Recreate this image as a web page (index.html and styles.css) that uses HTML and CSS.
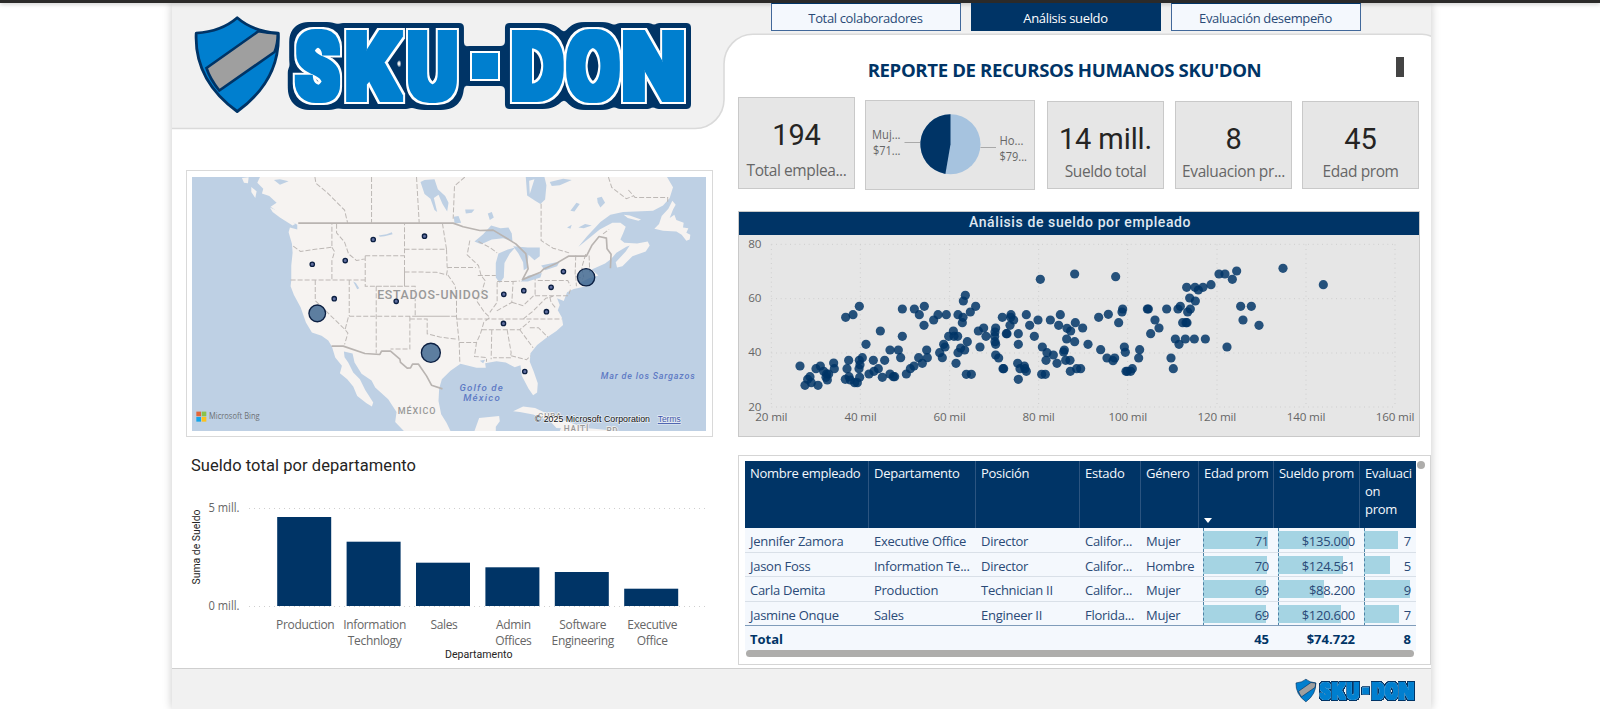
FILE: index.html
```html
<!DOCTYPE html>
<html lang="es">
<head>
<meta charset="utf-8">
<title>Reporte de recursos humanos</title>
<link rel="stylesheet" href="styles.css">
</head>
<body>
<div class="topbar"></div>
<div class="page">
  <svg class="backdrop" width="1259" height="134" viewBox="172 3 1259 134">
    <path class="backdrop-shape" d="M170 128.5H695A29 29 0 0 0 724 99V64A29 30 0 0 1 753 34.2H1422Q1428 34.2 1433 37V-5H170Z"/>
  </svg>
  <div class="columns">
    <div class="left">
      <svg class="logo" viewBox="192 14 502 101" width="502" height="101">
        <defs>
          <filter id="layers" filterUnits="userSpaceOnUse" x="280" y="14" width="420" height="104" color-interpolation-filters="sRGB">
            <feMorphology in="SourceGraphic" operator="dilate" radius="3" result="core"/>
            <feMorphology in="SourceAlpha" operator="dilate" radius="5" result="a1"/>
            <feFlood flood-color="#ffffff"/><feComposite in2="a1" operator="in" result="white"/>
            <feMorphology in="SourceAlpha" operator="dilate" radius="10"/>
            <feGaussianBlur stdDeviation="2"/>
            <feComponentTransfer result="a2"><feFuncA type="linear" slope="6" intercept="-2.500"/></feComponentTransfer>
            <feFlood flood-color="#003466"/><feComposite in2="a2" operator="in" result="navy"/>
            <feMerge><feMergeNode in="navy"/><feMergeNode in="white"/><feMergeNode in="core"/></feMerge>
          </filter>
        </defs>
        <g id="brand">
          <path class="shield" d="M237.2 17.8Q253 31.5 278.3 33.2Q280.500 80 237.200 111.500Q194 80 196.200 33.200Q221.500 31.500 237.200 17.800Z"/>
          <path class="band" d="M206.500 68L258.500 31.200Q268 33 277.800 33.400Q277.700 44 274.500 52L219.300 90.500Q210 79 206.500 68Z"/>
          <path class="shield-line" d="M237.2 17.8Q253 31.5 278.3 33.2Q280.500 80 237.200 111.500Q194 80 196.200 33.200Q221.500 31.500 237.200 17.800Z"/>
          <g class="word" filter="url(#layers)">
            <text x="295.500" y="98.800" textLength="44">S</text><text x="344.500" y="98.800" textLength="55">K</text><text x="407" y="98.800" textLength="51">U</text>
            <rect x="475" y="56" width="20" height="20"/>
            <text x="510.500" y="98.800" textLength="53">D</text><text x="566.500" y="98.800" textLength="53">O</text><text x="621" y="98.800" textLength="65">N</text>
          </g>
        </g>
      </svg>

      <div class="map-frame">
        <svg class="map" viewBox="36 35 1543 760" preserveAspectRatio="none">
          <rect class="sea" x="36" y="35" width="1543" height="760"/>
          <path class="land" d="M240 35L232 52L250 70L246 84L268 92L290 112L272 124L292 138L300 152L330 165L352 178L352 192L330 186L326 200L336 235L338 262L334 300L334 345L332 362L342 388L362 425L378 470L396 500L425 510L445 524L456 542L466 575L486 600L480 622L502 640L520 662L532 690L560 712L576 722L580 710L556 672L540 640L520 620L505 590L494 574L492 557L518 563L524 590L545 624L575 644L586 665L625 700L650 738L646 768L672 795H812L800 770L784 745L776 705L778 668L786 640L812 615L842 594L890 606L918 606L916 592L950 586L978 590L1005 604L1022 598L1026 630L1046 668L1060 688L1072 680L1074 652L1062 618L1050 588L1052 562L1072 538L1100 516L1130 496L1150 478L1146 455L1134 434L1140 418L1132 398L1152 406L1162 380L1182 370L1220 362L1200 352L1228 338L1256 330L1236 312L1276 294L1294 280L1310 262L1340 244L1350 240L1338 258L1308 290L1312 306L1328 302L1358 272L1398 258L1410 240L1404 228L1372 234L1334 232L1322 222L1330 204L1338 184L1322 172L1298 172L1260 192L1226 220L1196 244L1222 212L1262 170L1292 148L1330 140L1420 136L1450 120L1470 98L1480 66L1462 35Z"/>
          <path class="land" d="M270 126L292 136L330 160L346 176L338 180L300 156L278 140ZM186 38L206 36L204 54L192 52ZM214 65L230 78L226 98L214 80ZM1478 106L1466 130L1446 152L1438 176L1424 190L1450 196L1490 198L1506 208L1520 226L1530 222L1532 208L1520 202L1526 188L1510 186L1512 172L1490 164L1484 148L1470 158L1480 132L1488 118ZM1332 148L1350 150L1384 162L1376 166L1344 158ZM1000 736L1030 722L1066 726L1104 744L1150 762L1200 780L1190 788L1130 786L1110 764L1060 746L1020 738ZM1148 776L1190 784L1260 790L1310 795H1140ZM898 756L958 750L960 766L948 782V795H884Z"/>
          <path class="lake" d="M884 228L910 206L934 180L962 188L986 186L996 204L998 228L970 218L936 222L904 236ZM948 292L956 264L984 252L1006 246L990 264L974 292L972 336L960 352L948 336ZM1000 242L1044 246L1080 246L1080 272L1064 284L1046 268L1042 308L1032 314L1030 290L1016 264ZM1022 348L1046 330L1086 322L1082 336L1044 348ZM1084 300L1140 288L1132 302L1096 314ZM1038 35L1042 90L1066 106L1082 116L1096 102L1100 60L1094 35ZM722 50L734 44L764 42L774 72L796 92L806 112L802 138L788 116L776 88L762 98L772 140L764 134L752 100L734 86ZM1110 50L1150 40L1176 44L1140 60L1116 62ZM1172 136L1190 112L1200 116L1184 138ZM1252 98L1266 94L1276 112L1262 126L1254 112ZM1162 186L1176 178L1172 190ZM1196 186L1216 176L1236 180L1212 188ZM924 144L936 140L942 156L930 164ZM856 132L884 132L876 142L858 144ZM822 154L836 152L844 172L824 174ZM596 210L620 206L636 200L638 206L614 212L600 214ZM520 348L528 352L538 368L532 371ZM282 44L300 42L326 48L300 58ZM1048 46L1064 42L1050 86ZM900 585L916 582L910 592Z"/>
          <g class="state">
            <path d="M405 35L408 54L440 80L494 134L503 172M575 35V172M710 35L718 172M855 35L824 62L820 160M1084 115V225L1120 248L1168 262M1286 35L1296 66L1340 100L1360 92M1346 74L1366 96H1464V112"/>
            <path d="M340 242L362 258L400 252L456 245V175M456 245L464 258L456 285V342M332 343H556M470 175V202L494 230L506 265L530 285L556 280M556 271H674V175M556 271V362H674V271M674 251H800L788 175M674 319L770 320L800 328L804 306H888M800 251L802 306M406 343V405L496 492L504 502L494 536M508 343V450M508 452H810M496 490L506 452M589 362V563M589 362H706V452H835M674 319V362M690 452V550H632M690 460H742V504L780 514L830 520M804 328L826 360L830 400V452L838 530L840 588M870 225L862 268L896 300L904 330L916 345L904 385L890 405L914 440L930 455L912 470L902 504L890 530L884 572L920 575V588M838 530H890M830 460H1146M906 492H1020L1050 466M896 228L930 246L952 262M894 330H948M952 350V410L930 440M952 348H1000L996 410L950 436M996 348L1020 346M996 410L1030 420L1066 386V340M1066 390H1166L1172 372M1074 345H1164L1172 360M936 492L934 580M982 492L994 560L992 576H940M994 570L1040 582L1052 570M1020 492L1060 546M1050 486L1076 486L1104 514M1030 460L1060 436L1098 398L1120 392M1110 394L1114 410L1130 430M1188 270L1186 330L1210 340M1218 266L1206 306L1212 335M1228 270L1230 320M1188 330L1190 362M1270 205L1288 192"/>
          </g>
          <path class="border" d="M355 173H820L850 184L900 195L940 194L1008 235L1038 264L1045 310L1028 342L1082 320L1092 310L1132 292L1166 272H1220L1236 240L1258 213L1280 218L1282 250L1294 266L1292 308M455 541H490L555 563L600 566L605 556H632L660 580L662 590L682 607L692 606L698 595H716L740 630L755 658L788 669"/>
          <g class="country">
            <text x="592" y="400" font-size="37" textLength="333">ESTADOS-UNIDOS</text>
            <text x="654" y="745" font-size="27" textLength="113">MÉXICO</text>
            <text x="1075" y="757" font-size="24" textLength="70">CUBA</text>
            <text x="1152" y="797" font-size="25" textLength="74">HAITÍ</text>
            <text x="1280" y="803" font-size="25" textLength="34">RD</text>
          </g>
          <g class="water">
            <text x="839" y="674" font-size="29" textLength="130">Golfo de</text>
            <text x="850" y="706" font-size="29" textLength="110">México</text>
            <text x="1263" y="640" font-size="27" textLength="282">Mar de los Sargazos</text>
          </g>
          <g class="pins">
            <circle cx="412" cy="443" r="25"/><circle cx="753" cy="561" r="28.500"/><circle cx="1219" cy="335" r="26"/>
            <g class="dot">
            <circle cx="580" cy="222" r="6.500"/><circle cx="734" cy="212" r="6.500"/><circle cx="397" cy="296" r="6.500"/><circle cx="496" cy="285" r="6.500"/><circle cx="463" cy="399" r="6.500"/><circle cx="649" cy="407" r="6.500"/><circle cx="1151" cy="318" r="6.500"/><circle cx="1114" cy="365" r="6.500"/><circle cx="1032" cy="375" r="6.500"/><circle cx="972" cy="386" r="6.500"/><circle cx="1100" cy="438" r="6.500"/><circle cx="971" cy="473" r="6.500"/><circle cx="1035" cy="617" r="6.500"/>
            </g>
          </g>
          <rect x="49" y="737" width="14" height="14" fill="#e2673a"/><rect x="65" y="737" width="14" height="14" fill="#8bc34a"/><rect x="49" y="753" width="14" height="14" fill="#14a5ea"/><rect x="65" y="753" width="14" height="14" fill="#fbc21d"/>
          <text class="bing" x="87" y="760" textLength="152">Microsoft Bing</text>
          <text class="copy" x="1065" y="768" textLength="346">© 2025 Microsoft Corporation</text>
          <text class="terms" x="1434" y="768" textLength="69">Terms</text>
        </svg>
      </div>

      <div class="bars">
        <h2>Sueldo total por departamento</h2>
        <svg class="bars-plot" viewBox="186 480 530 185" width="530" height="185">
          <path class="grid" d="M249 508.500H709M249 606.500H709"/>
          <g class="axis"><text x="208.500" y="512" textLength="31">5 mill.</text><text x="208.500" y="610" textLength="31">0 mill.</text></g>
          <text class="axis-title" transform="translate(200 584.500) rotate(-90)" textLength="75">Suma de Sueldo</text>
          <g id="bars"></g>
          <text class="axis-title" x="445" y="658.300" textLength="67.500">Departamento</text>
        </svg>
      </div>
    </div>

    <div class="right">
      <nav class="tabs"><a class="tab">Total colaboradores</a><a class="tab on">Análisis sueldo</a><a class="tab">Evaluación desempeño</a></nav>
      <div class="title-row"><h1>REPORTE DE RECURSOS HUMANOS SKU'DON</h1><span class="marker"></span></div>
      <div class="cards">
        <div class="card first"><b>194</b><span>Total emplea...</span></div>
        <div class="card pie">
          <svg width="169" height="88" viewBox="866 101 169 88">
            <circle cx="950.500" cy="144.300" r="30" fill="#a6c3df"/>
            <path d="M950.500 144.300V114.300A30 30 0 0 0 945.400 173.900Z" fill="#003466"/>
            <path class="leader" d="M904.500 142.500H920M980.500 147.500H996"/>
            <g class="axis"><text x="872" y="139" textLength="28.500">Muj...</text><text x="873" y="155" textLength="27.500">$71...</text><text x="999.500" y="144.500" textLength="24">Ho...</text><text x="999.500" y="160.500" textLength="27.500">$79...</text></g>
          </svg>
        </div>
        <div class="card"><b>14 mill.</b><span>Sueldo total</span></div>
        <div class="card"><b>8</b><span>Evaluacion pr...</span></div>
        <div class="card"><b>45</b><span>Edad prom</span></div>
      </div>

      <div class="scatter">
        <h3>Análisis de sueldo por empleado</h3>
        <svg width="680" height="201" viewBox="27 92 2040 603">
          <path class="grid3" d="M124 117H1997M124 280H1997M124 443H1997M124 605H1997M124 117V605M391 117V605M659 117V605M926 117V605M1193 117V605M1461 117V605M1728 117V605M1995 117V605"/>
          <g id="scatter-axis" class="axis3"></g>
          <g id="scatter-points" class="points"></g>
        </svg>
      </div>

      <div class="table-frame">
        <div class="table">
          <div class="row head">
            <div>Nombre empleado</div><div>Departamento</div><div>Posición</div><div>Estado</div><div>Género</div><div class="sorted">Edad prom</div><div>Sueldo prom</div><div>Evaluaci<br>on<br>prom</div>
          </div>
          <div class="row"><div>Jennifer Zamora</div><div>Executive Office</div><div>Director</div><div>Califor...</div><div>Mujer</div><div class="num"><i style="width:65px"></i><em>71</em></div><div class="num"><i style="width:71px"></i><em>$135.000</em></div><div class="num"><i style="width:34px"></i><em>7</em></div></div>
          <div class="row"><div>Jason Foss</div><div>Information Te...</div><div>Director</div><div>Califor...</div><div>Hombre</div><div class="num"><i style="width:64px"></i><em>70</em></div><div class="num"><i style="width:65px"></i><em>$124.561</em></div><div class="num"><i style="width:26px"></i><em>5</em></div></div>
          <div class="row"><div>Carla Demita</div><div>Production</div><div>Technician II</div><div>Califor...</div><div>Mujer</div><div class="num"><i style="width:63px"></i><em>69</em></div><div class="num"><i style="width:46px"></i><em>$88.200</em></div><div class="num"><i style="width:46px"></i><em>9</em></div></div>
          <div class="row last"><div>Jasmine Onque</div><div>Sales</div><div>Engineer II</div><div>Florida...</div><div>Mujer</div><div class="num"><i style="width:63px"></i><em>69</em></div><div class="num"><i style="width:63px"></i><em>$120.600</em></div><div class="num"><i style="width:35px"></i><em>7</em></div></div>
          <div class="row total"><div>Total</div><div></div><div></div><div></div><div></div><div class="num"><em>45</em></div><div class="num"><em>$74.722</em></div><div class="num"><em>8</em></div></div>
          <div class="hscroll"></div>
        </div>
        <div class="vscroll"></div>
      </div>
    </div>
  </div>
  <footer class="footer">
    <svg viewBox="192 14 502 101" width="121" height="25"><use href="#brand"/></svg>
  </footer>
</div>
<script src="charts.js"></script>
</body>
</html>
```

FILE: styles.css
```css
* { box-sizing: border-box; }
body { margin: 0; width: 1600px; height: 709px; overflow: hidden; background: #fff; font-family: "Open Sans", "Noto Sans", sans-serif; color: #252423; }
h1, h2, h3 { margin: 0; }
.topbar { height: 3px; background: #2b2a29; position: relative; z-index: 3; box-shadow: 0 1px 4px rgba(0,0,0,.25); }
.page { position: relative; width: 1259px; height: 706px; margin-left: 172px; background: #fff; box-shadow: 0 0 9px rgba(0,0,0,.22); display: flex; flex-direction: column; }
.backdrop { position: absolute; left: 0; top: 0; display: block; }
.backdrop-shape { fill: #f1f1f1; stroke: #dadada; stroke-width: 1.600; }
.columns { position: relative; display: grid; grid-template-columns: 566px 693px; height: 665px; }
.left { padding-left: 14px; }
.right { display: flex; flex-direction: column; }

.logo { display: block; margin: 11px 0 0 6px; }
.shield { fill: #007fcf; }
.band { fill: #9f9f9f; stroke: #003466; stroke-width: 2.600; }
.shield-line { fill: none; stroke: #003466; stroke-width: 2.800; stroke-linejoin: round; }
.word { fill: #007fcf; }
.word text { font: 900 93px Roboto, sans-serif; }

.map-frame { margin-top: 55px; width: 527px; height: 267px; border: 1.500px solid #d9d9d9; background: #fff; padding: 6px 6px 5px 5px; }
.map { display: block; width: 514px; height: 254px; }
.sea, .lake { fill: #bed0e4; }
.land { fill: #f6f3f1; }
.state { fill: none; stroke: #bdb8b5; stroke-width: 3; stroke-dasharray: 15 6; }
.border { fill: none; stroke: #b9b4b1; stroke-width: 5; stroke-linejoin: round; }
.country { font-family: Roboto, sans-serif; font-weight: 500; fill: #999; stroke: #f6f3f1; stroke-width: 4; paint-order: stroke; }
.water { font-family: Roboto, sans-serif; font-weight: 500; font-style: italic; fill: #5f7bc4; }
.pins { fill: #37608c; fill-opacity: .8; stroke: #0b1f42; stroke-width: 4; }
.dot { fill: #3c4d8c; }
.bing { font: 500 25px "Open Sans", sans-serif; fill: #6d7175; }
.copy, .terms { font: 27px "Liberation Sans", sans-serif; fill: #111; stroke: #fff; stroke-opacity: .6; stroke-width: 4; paint-order: stroke; }
.terms { fill: #3d55a8; text-decoration: underline; }

.bars { margin-top: 17px; }
.bars h2 { font: 400 16.500px/23px Roboto, sans-serif; letter-spacing: .05px; padding-left: 5px; height: 26px; white-space: nowrap; }
.bars-plot { display: block; }
.grid { stroke: #cfcfcf; stroke-width: 1; stroke-dasharray: 1 4; fill: none; }
.axis { font-size: 12px; fill: #666; }
.axis-title { font: 400 10px Roboto, sans-serif; fill: #252423; }
.bar { fill: #003466; }
.bar-label { text-anchor: middle; font-size: 12px; letter-spacing: -.35px; fill: #666; }

.tabs { display: flex; gap: 10px; margin-left: 32.500px; height: 29px; position: relative; z-index: 4; }
.tab { width: 190px; height: 28px; border: 1.500px solid #41689a; border-top-color: #003466; background: #f4f8fd; color: #2a4a77; font-size: 13px; line-height: 28px; letter-spacing: -.35px; text-align: center; }
.tab.on { background: #003466; border-color: #003466; color: #fff; }
.title-row { display: flex; height: 65px; position: relative; }
h1 { width: 655px; text-align: center; padding: 24px 2px 0 0; font-size: 18.600px; line-height: 27px; font-weight: 700; letter-spacing: -.36px; color: #003466; white-space: nowrap; }
.marker { width: 8px; height: 20px; margin: 25px 0 0 3px; background: #444; }
.cards { display: flex; align-items: flex-start; height: 114px; }
.card { width: 117px; height: 88px; margin: 4px 0 0 11px; border: 1.500px solid #c9c9c9; background: #e6e6e6; display: flex; flex-direction: column; align-items: center; white-space: nowrap; }
.card b { font: 400 29px/34px Roboto, sans-serif; margin-top: 20px; letter-spacing: -.1px; }
.card span { font-size: 15.500px; line-height: 22px; margin-top: 4px; color: #666; letter-spacing: -.4px; }
.card.first { margin: 0; height: 92px; }
.card.first span { margin-top: 7px; }
.card.pie { width: 170px; height: 90px; margin: 3px 0 0 10px; }
.card.pie svg { display: block; }
.pie + .card { margin-left: 12px; }
.card:last-child { margin-left: 10px; }
.leader { stroke: #a9a9a9; stroke-width: 1; }

.scatter { width: 682px; height: 226px; border: 1px solid #c9c9c9; background: #e6e6e6; }
.scatter h3 { height: 23px; margin-bottom: 1px; background: #003466; color: #dfe7f0; font: 500 14px/20px Roboto, sans-serif; letter-spacing: .6px; text-align: center; padding-left: 2px; }
.scatter svg { display: block; margin-left: 0; }
.grid3 { stroke: #cecece; stroke-width: 3; stroke-dasharray: 3 11; fill: none; }
.axis3 { font-size: 35px; fill: #666; letter-spacing: -.5px; }
.points { fill: #003466; fill-opacity: .84; }

.table-frame { margin-top: 18px; width: 693px; height: 210px; border: 1.500px solid #d5d5d5; background: #fff; display: flex; padding: 5px 0 0 6px; }
.table { width: 671px; height: 190px; background: #f4f8fd; color: #2a4a77; font-size: 13px; letter-spacing: -.27px; }
.row { display: grid; grid-template-columns: 124px 107px 104px 61px 58px 75px 86px 56px; height: 24.500px; line-height: 26px; border-bottom: 1px solid #d9e0e8; white-space: nowrap; }
.row > div { padding-left: 5px; position: relative; overflow: hidden; }
.row.head { height: 67px; line-height: 18px; background: #003466; color: #f4f8fd; border: 0; }
.row.head > div { padding-top: 3px; border-right: 1px solid #2b5480; }
.row.head > div:last-child { border: 0; }
.sorted::after { content: ""; position: absolute; left: 5px; bottom: 5px; border: 4.500px solid transparent; border-top: 5.500px solid #fff; border-bottom: 0; }
.row.last { height: 24px; border-bottom: 1.500px solid #7f9cba; }
.num i { position: absolute; left: 4px; top: 3px; height: 18px; background: #a5d4e3; }
.num::before { content: ""; position: absolute; left: 4px; top: 0; height: 24px; border-left: 1px dashed #4e83a6; z-index: 1; }
.num em { position: relative; display: block; font-style: normal; text-align: right; padding-right: 5px; }
.total .num::before { display: none; }
.total { font-weight: 700; color: #003466; height: 24.500px; border: 0; line-height: 26px; letter-spacing: 0; }
.hscroll { height: 7px; margin: 0 2px 0 1px; border-radius: 4px; background: #aeadab; }
.vscroll { width: 8px; height: 8px; border-radius: 4px; background: #aeadab; margin: 0 0 0 1px; }

.footer { position: relative; height: 41px; background: #f1f1f1; border-top: 1.500px solid #cfcfcf; display: flex; justify-content: flex-end; padding: 9px 15px 0 0; }
```

FILE: charts.js
```js
const NS = "http://www.w3.org/2000/svg";
function add(parent, tag, attrs, text) {
  const el = document.createElementNS(NS, tag);
  for (const k in attrs) el.setAttribute(k, attrs[k]);
  if (text) el.textContent = text;
  parent.appendChild(el);
}

// Bar chart: label lines and bar top
const bars = document.getElementById("bars");
[
  [["Production"], 517], [["Information", "Technlogy"], 541.7], [["Sales"], 562.7],
  [["Admin", "Offices"], 567.3], [["Software", "Engineering"], 572], [["Executive", "Office"], 588.7]
].forEach(([lines, top], i) => {
  const x = 277.2 + i * 69.4;
  add(bars, "rect", { class: "bar", x, y: top, width: 54, height: 606 - top });
  lines.forEach((t, n) => add(bars, "text", { class: "bar-label", x: x + 28, y: 629.4 + n * 16 }, t));
});

// Scatter axes
const axis = document.getElementById("scatter-axis");
[20, 40, 60, 80, 100, 120, 140, 160].forEach((v, i) => {
  add(axis, "text", { x: 124 + i * 267.3, y: 647, "text-anchor": "middle" }, v + " mil");
});
[80, 60, 40, 20].forEach((v, i) => {
  add(axis, "text", { x: 94, y: 128 + i * 162.6, "text-anchor": "end" }, String(v));
});

// Scatter points
const pts = [
  210,482, 225,540, 233,522, 240,514, 244,532, 264,540, 258,490, 271,482, 281,498, 290,506, 296,506, 288,516, 292,524, 311,473, 313,490,
  347,336, 369,328, 388,303, 408,417, 451,377, 356,465, 351,490, 346,522, 357,514, 361,524, 374,532, 382,532, 389,516, 387,490, 388,465, 397,457, 390,478,
  417,506, 430,465, 432,498, 445,490, 457,516, 464,465, 480,434, 505,434, 480,506, 490,514, 494,514, 512,457, 517,393, 517,311, 553,311, 568,328, 583,303, 582,360, 611,344, 624,328, 649,328,
  529,506, 541,490, 552,482, 566,457, 577,474, 592,457, 590,434, 629,442, 637,457, 641,417, 645,425, 656,393, 670,377, 672,393, 683,393, 678,474, 684,442, 684,328, 697,352, 699,336, 700,287, 706,270, 692,428, 704,434, 712,409,
  709,507, 724,507, 721,320, 737,303, 745,377, 761,368, 768,393, 750,425, 797,368, 795,380, 794,393, 795,409, 797,417, 797,449, 806,458, 819,490, 821,490, 817,336, 843,328, 842,336, 851,344, 840,360, 831,385, 829,385,
  865,385, 865,417, 889,328, 899,360, 863,474, 870,490, 883,482, 885,490, 889,498, 865,522, 924,344, 913,393, 931,222, 937,425, 951,442, 948,465, 935,507, 946,507, 970,449, 961,344, 991,328, 986,360, 981,474, 1003,434, 1001,440, 1007,465, 1020,465, 1010,401, 1011,369, 1022,377, 1036,352, 1034,409, 1034,206, 1021,498, 1040,490,
  1052,490, 1058,368, 1074,417, 1106,336, 1135,327, 1157,214, 1178,311, 1176,320, 1166,352, 1112,433, 1131,458, 1154,458, 1149,466, 1183,425, 1186,441, 1188,498, 1192,498, 1202,498, 1207,490, 1226,458, 1229,433,
  1252,311, 1255,311, 1275,344, 1287,368, 1262,385, 1310,311, 1323,458, 1330,490, 1336,401, 1347,417, 1344,311, 1351,303, 1366,401, 1393,401, 1426,401, 1358,352, 1368,352, 1371,352, 1373,320, 1381,311, 1379,278, 1396,287, 1370,246, 1395,246, 1405,254, 1419,246, 1443,238,
  1467,206, 1485,206, 1507,222, 1520,197, 1491,425, 1532,303, 1564,303, 1539,344, 1587,360, 1659,189, 1780,238
];
const points = document.getElementById("scatter-points");
for (let i = 0; i < pts.length; i += 2) add(points, "circle", { cx: pts[i], cy: pts[i + 1], r: 13.8 });

// Country and sea names are letter-spaced; other fixed-width labels scale their glyphs
document.querySelectorAll("text[textLength]").forEach(t => {
  t.setAttribute("lengthAdjust", t.closest(".country, .water") ? "spacing" : "spacingAndGlyphs");
});
```
